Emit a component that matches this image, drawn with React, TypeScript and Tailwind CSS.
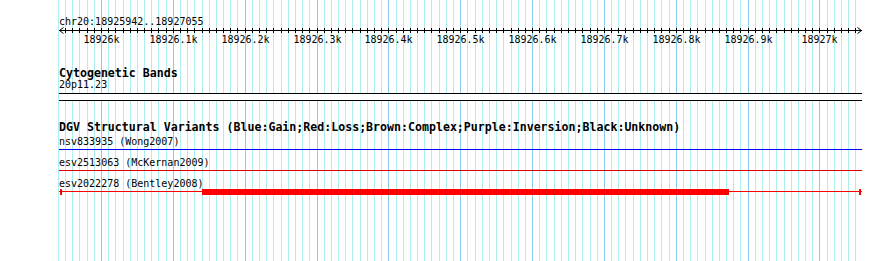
const START = 18925942;
const END = 18927055;
const X0 = 59.3;
const PX = 0.7185;

const xOf = (bp: number) => X0 + (bp - START) * PX;

const ticks: number[] = [];
for (let bp = 18925940; bp <= 18927050; bp += 10) ticks.push(bp);

const label = (bp: number) => {
  const k = bp / 1000;
  return k % 1 === 0 ? `${k}k` : `${k.toFixed(1)}k`;
};

function Grid() {
  return (
    <svg className="absolute inset-0" width={890} height={261}>
      {ticks.map((bp) => {
        const x = Math.round(xOf(bp)) + 0.5;
        return (
          <line
            key={bp}
            x1={x}
            x2={x}
            y1={0}
            y2={261}
            stroke={bp % 100 === 0 ? "#88cbec" : "#afeeee"}
            strokeWidth={1}
          />
        );
      })}
    </svg>
  );
}

function Ruler() {
  return (
    <svg className="block overflow-visible" width={890} height={20}>
      <line x1={59} x2={862} y1={2.5} y2={2.5} stroke="#000" />
      <polyline points="63.5,-0.5 59.5,2.5 63.5,5.5" fill="none" stroke="#000" />
      <polyline points="857.5,-0.5 861.5,2.5 857.5,5.5" fill="none" stroke="#000" />
      {ticks
        .filter((bp) => bp >= START && bp <= END)
        .map((bp) => {
          const x = Math.round(xOf(bp)) + 0.5;
          return <line key={bp} x1={x} x2={x} y1={0} y2={5} stroke="#000" />;
        })}
      {ticks
        .filter((bp) => bp % 100 === 0 && bp >= START && bp <= END)
        .map((bp) => (
          <text
            key={bp}
            x={Math.round(xOf(bp)) + 0.5}
            y={15}
            textAnchor="middle"
            fontSize={10}
            fontFamily="'DejaVu Sans Mono', monospace"
            fill="#000"
          >
            {label(bp)}
          </text>
        ))}
    </svg>
  );
}

type Row = { name: string; color: string; bar?: [number, number] };

const variants: Row[] = [
  { name: "nsv833935 (Wong2007)", color: "#0000ff" },
  { name: "esv2513063 (McKernan2009)", color: "#e00000" },
  { name: "esv2022278 (Bentley2008)", color: "#ff0000", bar: [202, 729] },
];

function VariantRow({ row }: { row: Row }) {
  return (
    <div>
      <div className="h-[12px] pl-[59px] text-[10px] leading-[12px] whitespace-pre">{row.name}</div>
      <svg className="block overflow-visible" width={890} height={9}>
        <rect x={59} y={1} width={803} height={1} fill={row.color} />
        {row.bar && (
          <>
            <rect x={60} y={-1} width={2} height={6} fill={row.color} />
            <rect x={859} y={-1} width={2} height={6} fill={row.color} />
            <rect x={row.bar[0]} y={-1} width={row.bar[1] - row.bar[0]} height={6} fill={row.color} />
          </>
        )}
      </svg>
    </div>
  );
}

export default function App() {
  return (
    <div className="relative w-[890px] h-[261px] overflow-hidden bg-white text-black font-['DejaVu_Sans_Mono',monospace]">
      <Grid />
      <div className="relative flex flex-col pt-[15px]">
        <div className="h-[13px] pl-[59px] text-[10px] leading-[13px]">chr20:18925942..18927055</div>
        <Ruler />

        <div className="mt-[20px] h-[11px] pl-[59px] text-[11.6px] font-bold leading-[11px]">Cytogenetic Bands</div>
        <div className="h-[12px] pl-[59px] text-[10px] leading-[12px]">20p11.23</div>
        <div className="mt-[2px] ml-[59px] h-[8px] w-[803px] border-y border-black bg-white" />

        <div className="mt-[21px] h-[11px] pl-[59px] text-[11.6px] font-bold leading-[11px] whitespace-pre">
          DGV Structural Variants (Blue:Gain;Red:Loss;Brown:Complex;Purple:Inversion;Black:Unknown)
        </div>
        <div className="mt-[3px]">
          {variants.map((row) => (
            <VariantRow key={row.name} row={row} />
          ))}
        </div>
      </div>
    </div>
  );
}
